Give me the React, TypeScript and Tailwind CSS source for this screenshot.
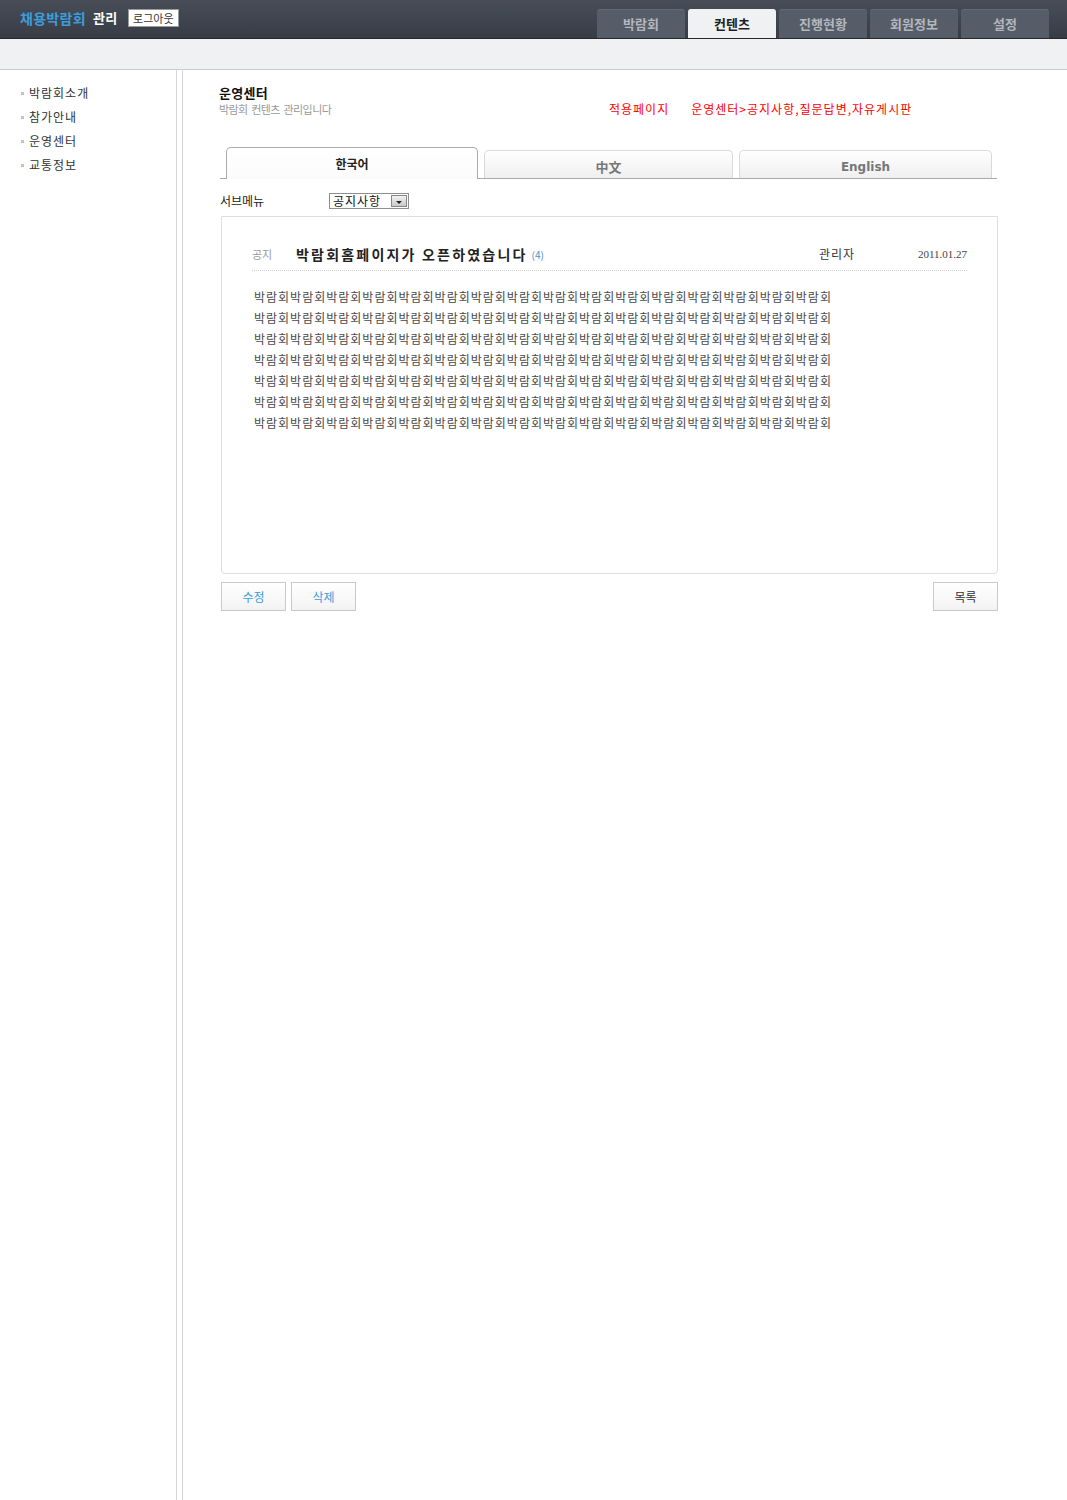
const TOP_MENU = ['박람회', '컨텐츠', '진행현황', '회원정보', '설정'];
const SIDE_MENU = ['박람회소개', '참가안내', '운영센터', '교통정보'];
const BODY_LINE = '박람회'.repeat(16);

const KR = { fontFamily: '"Noto Sans CJK KR", "Noto Sans", sans-serif' };

export default function App() {
  return (
    <div className="min-h-[1500px] bg-white text-[#333]" style={KR}>
      {/* Top bar */}
      <header className="h-[39px] flex items-end justify-between bg-gradient-to-b from-[#484e59] to-[#373c45] border-b border-[#25282d] pr-[18px]">
        <div className="self-stretch flex items-center pl-[20px] pb-[2px]">
          <span className="text-[14px] font-bold tracking-[0.3px] text-[#3d9ddb]">채용박람회</span>
          <span className="ml-[7px] text-[13px] font-bold tracking-[0.5px] text-white">관리</span>
          <span className="ml-[10px] h-[18px] w-[51px] flex items-center justify-center bg-white border border-[#9a9a9a] text-[11px] leading-none text-[#333]">
            로그아웃
          </span>
        </div>
        <nav className="flex gap-[3px]">
          {TOP_MENU.map((m) => {
            const active = m === '컨텐츠';
            return (
              <div
                key={m}
                className={
                  active
                    ? 'w-[88px] h-[29px] flex items-center justify-center rounded-t-[3px] bg-[#f0f1f3] text-[13px] font-bold text-[#1b1f27]'
                    : 'w-[88px] h-[29px] flex items-center justify-center rounded-t-[3px] bg-[#575d68] border-t border-[#656b76] text-[13px] font-bold text-[#b3b7be]'
                }
              >
                {m}
              </div>
            );
          })}
        </nav>
      </header>

      {/* Sub bar */}
      <div className="h-[31px] bg-[#f0f1f3] border-b border-[#cbcbcb]" />

      <div className="flex min-h-[1430px]">
        {/* Sidebar */}
        <aside className="w-[176px] pt-[11px]">
          <ul>
            {SIDE_MENU.map((s) => (
              <li key={s} className="h-[24px] flex items-center pl-[21px] text-[12px] tracking-[1px] text-[#333]">
                <span className="w-[3px] h-[3px] bg-[#c4c4c4] mr-[5px]" />
                {s}
              </li>
            ))}
          </ul>
        </aside>
        <div className="w-[7px] border-l border-r border-[#d6d6d6] bg-white" />

        {/* Main */}
        <main className="pl-[36px] pt-[15px] w-[814px]">
          <div className="flex items-end">
            <div className="w-[390px]">
              <h2 className="text-[13px] leading-[16px] font-bold tracking-[0.3px] text-[#111]">운영센터</h2>
              <p className="text-[11px] leading-[16px] tracking-[-0.6px] text-[#999]">박람회&nbsp; 컨텐츠&nbsp; 관리입니다</p>
            </div>
            <div className="flex text-[12px] leading-[16px] text-[#ff0000] tracking-[1px]">
              <span>적용페이지</span>
              <span className="ml-[22px]">운영센터&gt;공지사항,질문답변,자유게시판</span>
            </div>
          </div>

          {/* Language tabs */}
          <div className="mt-[30px] ml-[1px] w-[777px] flex items-end gap-[6px] pl-[6px] border-b border-[#a9a9a9]">
            <div className="w-[252px] h-[32px] -mb-px flex items-center justify-center rounded-t-[5px] border border-b-0 border-[#aaa] bg-gradient-to-b from-white to-[#fbfbfb] text-[12px] font-bold text-[#222]">
              한국어
            </div>
            <div className="w-[249px] h-[28px] flex items-center justify-center pt-[4px] rounded-t-[5px] border border-b-0 border-[#d9d9d9] bg-gradient-to-b from-white to-[#efefef] text-[13px] font-bold text-[#777]">
              中文
            </div>
            <div className="w-[253px] h-[28px] flex items-center justify-center pt-[4px] rounded-t-[5px] border border-b-0 border-[#d9d9d9] bg-gradient-to-b from-white to-[#efefef] text-[12px] font-bold text-[#777]" style={{ fontFamily: '"DejaVu Sans", sans-serif' }}>
              English
            </div>
          </div>

          {/* Sub menu select */}
          <div className="mt-[14px] ml-[1px] h-[16px] flex items-center">
            <span className="w-[109px] text-[12px] text-[#222]">서브메뉴</span>
            <div className="w-[80px] h-[16px] flex items-center justify-between border border-[#8f8f8f] bg-white pl-[3px] pr-[1px]">
              <span className="text-[12px] leading-none tracking-[1px] text-[#111]">공지사항</span>
              <span className="w-[16px] h-[12px] flex items-center justify-center border border-[#888] bg-gradient-to-b from-[#f2f2f2] to-[#c9c9c9]">
                <span className="w-0 h-0 border-l-[3px] border-r-[3px] border-t-[3px] border-l-transparent border-r-transparent border-t-[#222] mt-[2px]" />
              </span>
            </div>
          </div>

          {/* Content box */}
          <section className="mt-[7px] ml-[2px] w-[777px] h-[358px] border border-[#dedede] rounded-b-[4px] px-[30px]">
            <div className="pt-[29px] pb-[8px] border-b border-dotted border-[#cfcfcf] flex items-center h-[54px]">
              <span className="w-[44px] text-[11px] text-[#999]">공지</span>
              <div className="flex-1 flex items-center">
                <span className="text-[14px] font-bold tracking-[2.2px] text-[#222]">박람회홈페이지가 오픈하였습니다</span>
                <span className="ml-[4px] text-[10px] text-[#3f8fc8]">(4)</span>
              </div>
              <span className="w-[99px] text-[12px] tracking-[1px] text-[#333]">관리자</span>
              <span className="text-[11px] text-[#444]" style={{ fontFamily: '"Liberation Serif", serif' }}>2011.01.27</span>
            </div>
            <div className="pt-[15px] pl-[2px] text-[12px] leading-[21px] tracking-[1px] text-[#4a4a4a]">
              {Array.from({ length: 7 }).map((_, i) => (
                <div key={i}>{BODY_LINE}</div>
              ))}
            </div>
          </section>

          {/* Buttons */}
          <div className="mt-[8px] ml-[2px] w-[777px] flex">
            <button className="w-[65px] h-[29px] border border-[#c9c9c9] bg-gradient-to-b from-white to-[#f3f3f3] text-[12px] text-[#3d9ddb]">수정</button>
            <button className="ml-[5px] w-[65px] h-[29px] border border-[#c9c9c9] bg-gradient-to-b from-white to-[#f3f3f3] text-[12px] text-[#3d9ddb]">삭제</button>
            <button className="ml-auto w-[65px] h-[29px] border border-[#c9c9c9] bg-gradient-to-b from-white to-[#f3f3f3] text-[12px] text-[#333]">목록</button>
          </div>
        </main>
      </div>
    </div>
  );
}
